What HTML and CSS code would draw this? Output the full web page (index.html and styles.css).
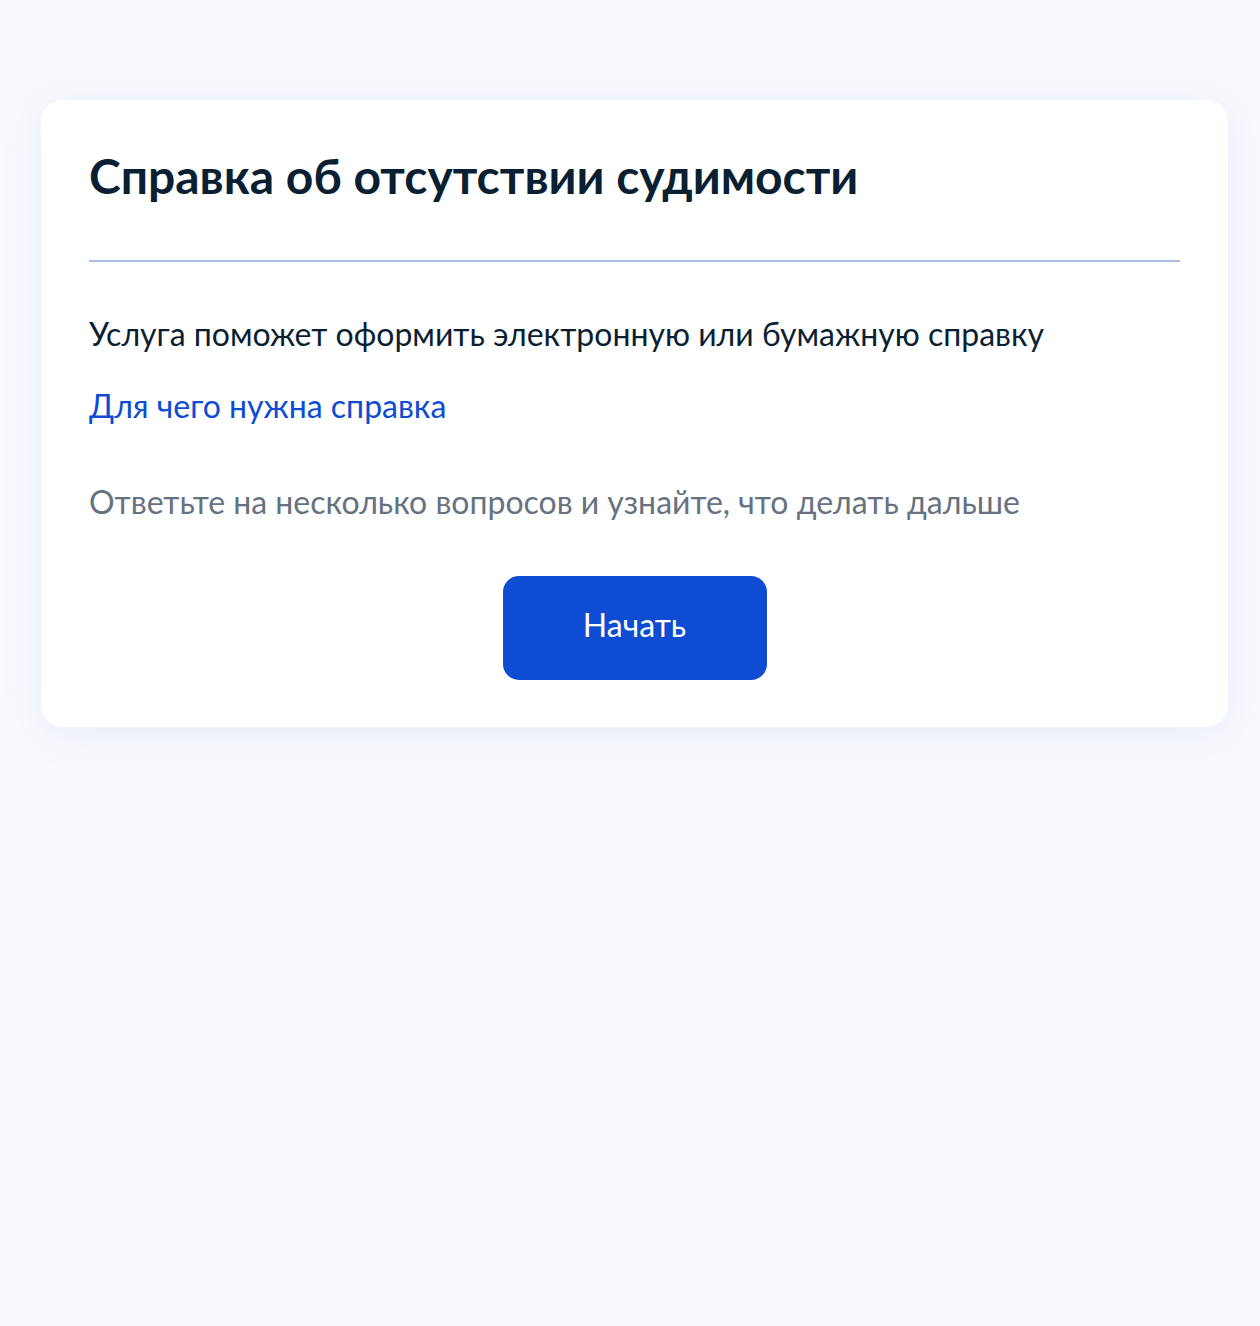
FILE: index.html
```html
<!DOCTYPE html>
<html lang="ru">
<head>
<meta charset="utf-8">
<link rel="stylesheet" href="styles.css">
</head>
<body>
<main class="page">
  <section class="card">
    <h1 class="title">Справка об отсутствии судимости</h1>
    <hr class="divider">
    <p class="lead">Услуга поможет оформить электронную или бумажную справку</p>
    <a class="link" href="#">Для чего нужна справка</a>
    <p class="hint">Ответьте на несколько вопросов и узнайте, что делать дальше</p>
    <div class="actions">
      <button class="btn" type="button">Начать</button>
    </div>
  </section>
</main>
</body>
</html>
```

FILE: styles.css
```css
html, body {
  margin: 0;
  padding: 0;
}
body {
  background: #f9fafe;
  font-family: Lato, "Noto Sans", sans-serif;
  color: #0b1f33;
  min-height: 1326px;
}
.page {
  padding: 100px 32px 0 41px;
}
.card {
  background: #fff;
  border-radius: 22px;
  box-shadow: 0 6px 40px rgba(100, 130, 200, 0.12);
  padding: 48px 48px 46px 48px;
  box-sizing: border-box;
  min-height: 627px;
}
.title {
  margin: 0;
  font-size: 48px;
  font-weight: 700;
  line-height: 56px;
  color: #0b1f33;
}
.divider {
  border: 0;
  height: 2px;
  background: #a9bde8;
  margin: 56px 0 52px;
}
.lead {
  margin: 0;
  font-size: 32px;
  line-height: 40px;
  color: #0b1f33;
}
.link {
  display: inline-block;
  margin-top: 32px;
  font-size: 32px;
  line-height: 40px;
  color: #0d4cd3;
  text-decoration: none;
}
.hint {
  margin: 56px 0 0;
  font-size: 32px;
  line-height: 40px;
  color: #66727f;
}
.actions {
  display: flex;
  justify-content: center;
  margin-top: 54px;
}
.btn {
  width: 264px;
  height: 104px;
  border: 0;
  border-radius: 16px;
  background: #0d4cd3;
  color: #fff;
  font-family: Lato, "Noto Sans", sans-serif;
  font-size: 32px;
  line-height: 40px;
  padding: 0 0 6px;
}
```
